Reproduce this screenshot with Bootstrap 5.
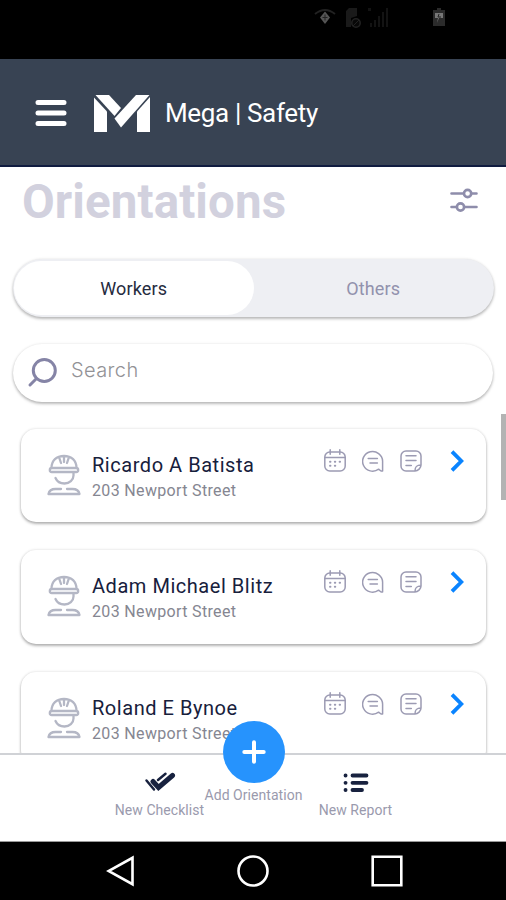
<!DOCTYPE html>
<html lang="en">
<head>
<meta charset="utf-8">
<meta name="viewport" content="width=device-width, initial-scale=1">
<title>Mega | Safety</title>
<link href="https://cdn.jsdelivr.net/npm/bootstrap@5.3.0/dist/css/bootstrap.min.css" rel="stylesheet">
<style>
body{font-family:Roboto,"Liberation Sans",sans-serif;background:#fff}
svg{display:block;flex:none;fill:none}
.screen{width:506px;height:900px}
.status{height:59px;background:#000;padding:7px 58px 0 313px}
.topbar{height:108px;background:#384353;border-bottom:2px solid #101c40;padding:2px 0 0 35px}
.logo{fill:#fff}
.brand{font-size:26px;line-height:30px;margin-left:14px;letter-spacing:-.35px}
.view{height:586px}
.heading{height:92px;padding:7px 28px 0 22px}
.heading h1{font-size:47.500px;line-height:56px;font-weight:700;color:#d2d1de;letter-spacing:.1px}
.filter{margin-top:14px}
.pill{height:58px;border-radius:29px;box-shadow:0 2px 3px rgba(0,0,0,.25),0 0 3px rgba(0,0,0,.1)}
.switch{width:481px;margin-left:13px;background:#eeeff3;padding:2px 1px;font-size:18px}
.switch .opt{width:240px;border-radius:28px;color:#9292ad;letter-spacing:.15px}
.switch .opt.on{background:#fff;color:#252b40}
.search{width:480px;margin:26.500px 0 0 13px;padding-left:14px;font:400 20px/26px Inter,sans-serif;color:#929296;letter-spacing:.4px}
.search span{margin:-5px 0 0 14px;font-weight:300}
.people{padding:27px 20px 0 21px;gap:28px}
.person{height:93.500px;flex:none;border:0;border-radius:15px;padding:20px 21.500px 0 26px;box-shadow:0 2px 3px rgba(0,0,0,.28),0 0 3px rgba(0,0,0,.14)}
.person h2{font-size:20px;line-height:26px;letter-spacing:.54px;color:#17203c;margin:3px 0 0}
.person p{font-size:16px;line-height:25px;color:#858691;margin:0;letter-spacing:.34px}
.who{margin:5px 11px 0 0}
.acts{gap:16px}
.acts .go{margin-left:11px}
.thumb{right:0;top:414px;width:5px;height:86px;background:#b3b3b3}
.tabs{height:89px;background:#fff;border-top:2px solid #d0d2d6;border-bottom:1px solid #999;padding-left:115px;font-size:14px;line-height:18px;color:#9a9aad;letter-spacing:.05px}
.tab{width:89px;padding-top:17px;gap:7px}
.tab-mid{width:99px;padding-top:0;gap:3px}
.tab-end{width:73px;margin-left:16px}
.add{width:62px;height:62px;background:#2693fd;margin-top:-34px}
.sys{height:58px;background:#000;padding:0 103px 0 106px}
</style>
</head>
<body>
<svg width="0" height="0" class="position-absolute">
<defs>
<symbol id="worker" viewBox="0 0 34 42"><g fill="none" stroke="#b4b7c5" stroke-width="2.300" stroke-linecap="round" stroke-linejoin="round"><path d="M4.500 14C4.500 6.500 9.500 2 17 2S29.500 6.500 29.500 14M12.500 4.500 14 9M17 2.500V8M21.500 4.500 20 9"/><rect x="2.800" y="14" width="28.400" height="4" rx="2"/><path d="M26.500 19v2.500c0 4.500-4 8-9 8-4.500 0-7.500-2-9-5.500M14 35H8.500c-3.500 0-6.300 1.500-7 5h31c-.7-3.500-3.500-5-7-5H20"/></g></symbol>
<symbol id="cal" viewBox="0 0 22 23"><g fill="none" stroke="#9c9bb3" stroke-width="1.500" stroke-linecap="round"><rect x=".8" y="3" width="20.400" height="19" rx="5"/><path d="M1 8.500h20M6.200.8v4.400M15.800.8v4.400"/><path d="M6 12.800h.5M10.800 12.800h.5M15.600 12.800h.5M6 16.800h.5M10.800 16.800h.5" stroke-width="1.900"/></g></symbol>
<symbol id="chat" viewBox="0 0 22 23"><g fill="none" stroke="#9c9bb3" stroke-width="1.500" stroke-linecap="round" stroke-linejoin="round"><path d="M16.600 20.200A10 9.800 0 1 1 20.600 12V22h-1.600z"/><path d="M6.200 9.500h9.200M8 14h7.400"/></g></symbol>
<symbol id="note" viewBox="0 0 22 23"><g fill="none" stroke="#9c9bb3" stroke-width="1.500" stroke-linecap="round" stroke-linejoin="round"><path d="M15 22H6a5 5 0 0 1-5-5V7a5 5 0 0 1 5-5h10a5 5 0 0 1 5 5v9M15 22c0-4 1-6 6-6 0 3-3 6-6 6"/><path d="M6 6.800h10M6 11.500h10M6 16.500h5.300"/></g></symbol>
<symbol id="go" viewBox="0 0 16 24"><path d="M3 2.600 12.300 12 3 21.400" fill="none" stroke="#0a84ff" stroke-width="3.800"/></symbol>
</defs>
</svg>
<div class="screen d-flex flex-column overflow-hidden position-relative">
<div class="status">
<svg width="140" height="24" viewBox="0 0 140 24"><g stroke="#222" stroke-width="2"><path d="M2 7Q12-1 22 7"/><path d="M12 4.500 17 10.500 12 17 7 10.500z" fill="#555" stroke="none"/><path d="M9.500 10.500h5M12 7.500v6" stroke="#222" stroke-width="1"/></g><g fill="#1a1a1a"><path d="M33 4l3-3h8v8l-6 2v9h-5z"/><circle cx="43" cy="16" r="4.200" stroke="#222" stroke-width="1.500" fill="#080808"/><path d="M40 19l6-6" stroke="#222"/><path d="M57 16h2v4h-2zM61 13h2v7h-2zM65 9h2v11h-2zM69 5h2v15h-2zM73 1h2v19h-2zM55 1h3v3h-3z" fill="#131313"/></g><path d="M120 3h4V1h4v2h4v16h-12z" fill="#2b2b2b"/><path d="M122 6h8v5h-4l-2 5 1-5h-3zM129 12l-3 4" fill="#777"/><path d="M126 7l-1 3h3" stroke="#222"/></svg>
</div>
<header class="topbar d-flex align-items-center text-white">
<svg width="32" height="28" viewBox="0 0 32 28" stroke="#fff" stroke-width="5" stroke-linecap="round"><path d="M3 3.500h26M3 14h26M3 24.500h26"/></svg>
<svg class="logo ms-4" width="60" height="39" viewBox="0 0 60 39"><path d="M3 3.500 16 17.500V38H3z"/><path d="M4.500 1H18l12 13-6.500 8z"/><path d="M45 1h13.500L30 33.500l-6.500-9z"/><path d="M59 3v35H46V17.500z"/></svg>
<div class="brand">Mega | Safety</div>
</header>
<main class="view overflow-hidden d-flex flex-column">
<div class="heading d-flex justify-content-between flex-shrink-0">
<h1 class="m-0">Orientations</h1>
<svg class="filter" width="28" height="24" viewBox="0 0 28 24" stroke="#8e8dab" stroke-width="2.600" stroke-linecap="round"><path d="M1.500 5.500h12M22 5.500h4.500M1.500 19H6M14.500 19h12"/><circle cx="17.600" cy="5.500" r="3.600"/><circle cx="10.500" cy="19" r="3.600"/></svg>
</div>
<div class="pill switch d-flex flex-shrink-0">
<div class="opt on d-flex align-items-center justify-content-center">Workers</div>
<div class="opt d-flex align-items-center justify-content-center">Others</div>
</div>
<div class="pill search d-flex align-items-center flex-shrink-0">
<svg width="30" height="30" viewBox="0 0 30 30" stroke="#8584a6" stroke-width="3" stroke-linecap="round"><circle cx="17.300" cy="12.500" r="11"/><path d="M9.500 20.500 3 27"/></svg>
<span>Search</span>
</div>
<div class="people d-flex flex-column">
<article class="card person flex-row align-items-start">
<svg class="who" width="34" height="42"><use href="#worker"/></svg>
<div class="flex-grow-1 text-nowrap"><h2 class="fw-normal">Ricardo A Batista</h2><p>203 Newport Street</p></div>
<div class="acts d-flex"><svg width="22" height="23"><use href="#cal"/></svg><svg width="22" height="23"><use href="#chat"/></svg><svg width="22" height="23"><use href="#note"/></svg><svg class="go" width="16" height="24"><use href="#go"/></svg></div>
</article>
<article class="card person flex-row align-items-start">
<svg class="who" width="34" height="42"><use href="#worker"/></svg>
<div class="flex-grow-1 text-nowrap"><h2 class="fw-normal">Adam Michael Blitz</h2><p>203 Newport Street</p></div>
<div class="acts d-flex"><svg width="22" height="23"><use href="#cal"/></svg><svg width="22" height="23"><use href="#chat"/></svg><svg width="22" height="23"><use href="#note"/></svg><svg class="go" width="16" height="24"><use href="#go"/></svg></div>
</article>
<article class="card person flex-row align-items-start">
<svg class="who" width="34" height="42"><use href="#worker"/></svg>
<div class="flex-grow-1 text-nowrap"><h2 class="fw-normal">Roland E Bynoe</h2><p>203 Newport Street</p></div>
<div class="acts d-flex"><svg width="22" height="23"><use href="#cal"/></svg><svg width="22" height="23"><use href="#chat"/></svg><svg width="22" height="23"><use href="#note"/></svg><svg class="go" width="16" height="24"><use href="#go"/></svg></div>
</article>
</div>
</main>
<div class="thumb position-absolute"></div>
<nav class="tabs d-flex text-nowrap position-relative">
<div class="tab d-flex flex-column align-items-center">
<svg width="32" height="22" viewBox="0 0 32 22" stroke="#18223f" stroke-linecap="round"><path d="M9 9.500 14.500 15.500 28.500 3.500" stroke-width="5"/><path d="M14 8 21.500 1.800M2.500 8.500l7.500 9" stroke-width="2.500"/></svg>
<span>New Checklist</span>
</div>
<div class="tab tab-mid d-flex flex-column align-items-center">
<div class="add rounded-circle d-flex align-items-center justify-content-center"><svg width="24" height="24" viewBox="0 0 24 24" stroke="#fff" stroke-width="4" stroke-linecap="round"><path d="M12 2.300v19.400M2.300 12h19.400"/></svg></div>
<span>Add Orientation</span>
</div>
<div class="tab tab-end d-flex flex-column align-items-center">
<svg width="26" height="22" viewBox="0 0 26 22" stroke="#18223f" stroke-width="3.800" stroke-linecap="round"><path d="M2.500 3.500h.1M9.500 3.500h14M2.500 10.800h.1M9.500 10.800h14M2.500 18h.1M9.500 18h9.500"/></svg>
<span>New Report</span>
</div>
</nav>
<div class="sys d-flex align-items-center justify-content-between">
<svg width="29" height="32" viewBox="0 0 29 32" stroke="#fff" stroke-width="2.600"><path d="M26.500 2.800v26.400L2.500 16z"/></svg>
<svg width="32" height="32" viewBox="0 0 32 32" stroke="#fff" stroke-width="2.600"><circle cx="16" cy="16" r="14.500"/></svg>
<svg width="32" height="32" viewBox="0 0 32 32" stroke="#fff" stroke-width="2.600"><path d="M1.700 1.700h28.600v28.600H1.700z"/></svg>
</div>
</div>
<script src="https://cdn.jsdelivr.net/npm/bootstrap@5.3.0/dist/js/bootstrap.bundle.min.js"></script>
</body>
</html>
